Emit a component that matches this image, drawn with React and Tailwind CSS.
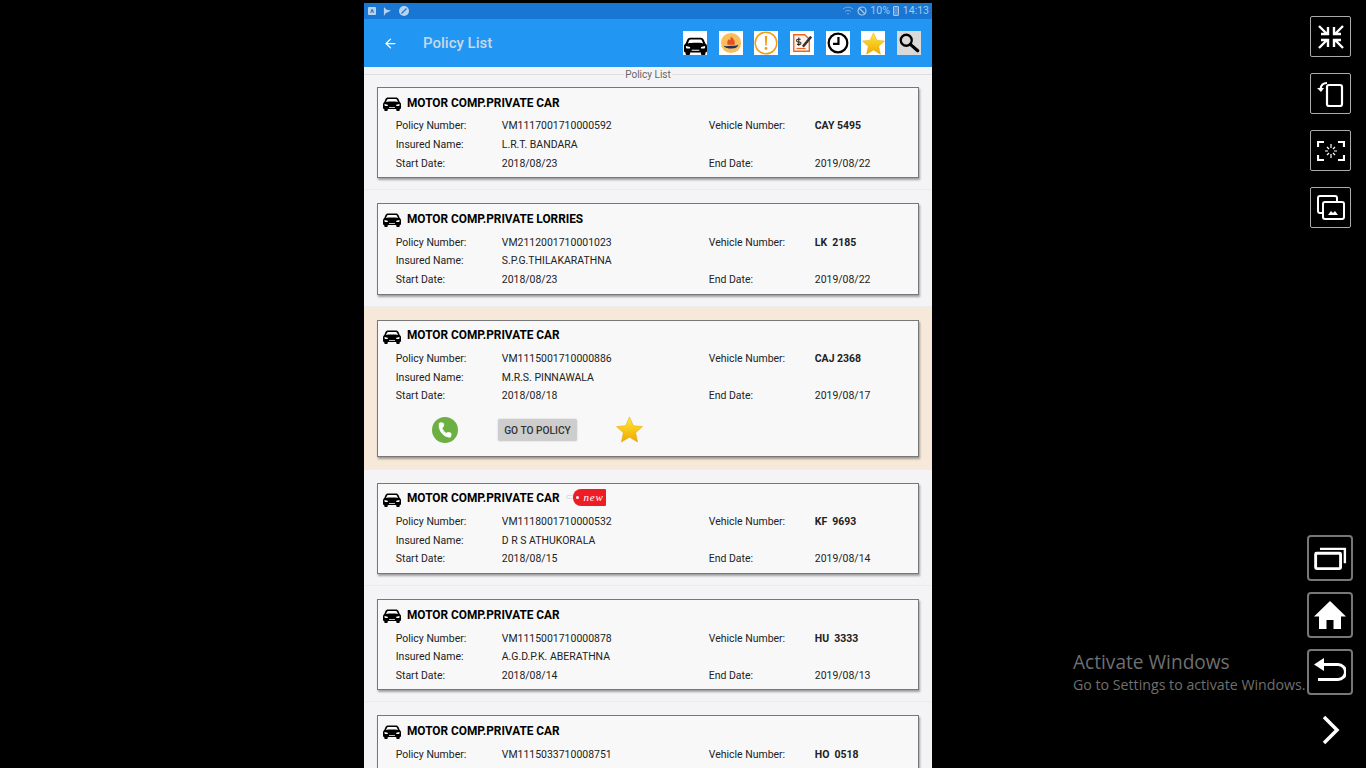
import React from 'react';
import { ArrowLeft, Phone } from 'lucide-react';

const policies = [
  { type: 'MOTOR COMP.PRIVATE CAR', no: 'VM1117001710000592', vehicle: 'CAY 5495', name: 'L.R.T. BANDARA', start: '2018/08/23', end: '2019/08/22' },
  { type: 'MOTOR COMP.PRIVATE LORRIES', no: 'VM2112001710001023', vehicle: 'LK  2185', name: 'S.P.G.THILAKARATHNA', start: '2018/08/23', end: '2019/08/22' },
  { type: 'MOTOR COMP.PRIVATE CAR', no: 'VM1115001710000886', vehicle: 'CAJ 2368', name: 'M.R.S. PINNAWALA', start: '2018/08/18', end: '2019/08/17', open: true },
  { type: 'MOTOR COMP.PRIVATE CAR', no: 'VM1118001710000532', vehicle: 'KF  9693', name: 'D R S ATHUKORALA', start: '2018/08/15', end: '2019/08/14', isNew: true },
  { type: 'MOTOR COMP.PRIVATE CAR', no: 'VM1115001710000878', vehicle: 'HU  3333', name: 'A.G.D.P.K. ABERATHNA', start: '2018/08/14', end: '2019/08/13' },
  // last row runs off the bottom of the screen, only the first line shows
  { type: 'MOTOR COMP.PRIVATE CAR', no: 'VM1115033710008751', vehicle: 'HO  0518', partial: true },
];

const CarIcon = ({ className }) => (
  <svg viewBox="0 0 36 28" className={className} fill="#000">
    <path d="M10 1h16c2.500 0 4 1.200 5 3.200L33.400 10c1.700 1 2.600 2.500 2.600 4.300V22a2 2 0 0 1-2 2h-.5v2a2 2 0 0 1-2 2h-3a2 2 0 0 1-2-2v-2H9.500v2a2 2 0 0 1-2 2h-3a2 2 0 0 1-2-2v-2H2a2 2 0 0 1-2-2v-7.700C0 12.500.9 11 2.600 10L5 4.200C6 2.200 7.500 1 10 1z" />
    <path d="M10.500 4h15c1.300 0 2.200.6 2.700 1.800l1.800 4.200C24 8.700 12 8.700 6 10l1.800-4.200C8.300 4.600 9.200 4 10.500 4z" fill="#fff" />
    <path d="M3 14l6.500 1.500v2.500H5c-1.300 0-2-.8-2-2zM33 14l-6.500 1.500v2.500H31c1.300 0 2-.8 2-2zM12 20h12v1.500H12z" fill="#fff" />
  </svg>
);

const StarIcon = ({ id, className }) => (
  <svg viewBox="0 0 28 28" className={className}>
    <defs>
      <linearGradient id={id} x1="0" y1="0" x2="0" y2="1">
        <stop offset="0" stopColor="#ffe93b" />
        <stop offset="1" stopColor="#f0a800" />
      </linearGradient>
    </defs>
    <path d="M14 1l4 9 9.500 1-7.100 6.400L22.400 27 14 22l-8.400 5 2-9.600L.5 11 10 10z" fill={`url(#${id})`} stroke="#e0a000" strokeWidth=".5" />
  </svg>
);

const HeaderIcons = () => (
  <div className="flex items-center gap-[11.67px]">
    <div className="w-6 h-6 bg-white overflow-hidden flex items-end justify-center">
      <CarIcon className="w-[23px] h-[20px] shrink-0 translate-y-[1px]" />
    </div>
    <div className="w-6 h-6 bg-white flex items-center justify-center">
      <svg viewBox="0 0 24 24" className="w-[22px] h-[22px]">
        <circle cx="12" cy="12" r="11" fill="#f7bf5d" />
        <path d="M12 5c1 1.500 4 3 4 6v3H8v-3c0-1.500 1-2 1.500-3L11 9z" fill="#e8501f" />
        <path d="M4 15c3 1 5 0 8 0s5 .5 8-1c-1 4-5 4-8 4s-6 0-8-3z" fill="#1f3550" />
      </svg>
    </div>
    <div className="w-6 h-6 bg-white flex items-center justify-center">
      <svg viewBox="0 0 24 24" className="w-6 h-6">
        <circle cx="12" cy="12" r="10.800" fill="#fff" stroke="#f39c12" strokeWidth="1.500" />
        <path d="M10.800 5h2.400l-.5 9.500h-1.400z" fill="#f39c12" />
        <circle cx="12" cy="17.500" r="1.400" fill="#f39c12" />
      </svg>
    </div>
    <div className="w-6 h-6 bg-white flex items-center justify-center">
      <svg viewBox="0 0 24 24" className="w-[22px] h-[22px]">
        <path d="M3 3h12l5 5v13H3z" fill="#fdf3ea" stroke="#e8662a" strokeWidth="1.500" />
        <path d="M6 18h10" stroke="#e8662a" strokeWidth="1.200" />
        <path d="M8.500 6v9M10.500 8H7.500a1.300 1.300 0 0 0 0 2.800h2a1.300 1.300 0 0 1 0 2.700H6.500" fill="none" stroke="#222" strokeWidth="1.100" />
        <path d="M12 15L21 4l2 2-9 11z" fill="#333" />
      </svg>
    </div>
    <div className="w-6 h-6 bg-white flex items-center justify-center">
      <svg viewBox="0 0 24 24" className="w-[22px] h-[22px]" fill="none" stroke="#000" strokeWidth="2.400">
        <circle cx="12" cy="12" r="10.200" />
        <path d="M12.500 5.500V13H6.500" />
      </svg>
    </div>
    <div className="w-6 h-6 bg-white flex items-center justify-center">
      <StarIcon id="star-head" className="w-[23px] h-[23px]" />
    </div>
    <div className="w-6 h-6 bg-[#d9d9d9] flex items-center justify-center">
      <svg viewBox="0 0 24 24" className="w-[22px] h-[22px]" fill="none" stroke="#000">
        <circle cx="9" cy="9" r="6" strokeWidth="2.500" />
        <path d="M13.500 13.500L21.500 20.500" strokeWidth="3.500" strokeLinecap="round" />
      </svg>
    </div>
  </div>
);

const NewTag = () => (
  <div className="flex items-center ml-[6px] -mt-[4px]">
    <div className="w-[8px] h-[4px] rounded-full border border-[#ddd] -mr-[1px]" />
    <div className="relative h-[17px] w-[33px] bg-[#ee1c25] rounded-l-[8px] rounded-r-[1px] flex items-center justify-end pr-[2px] font-['Liberation_Serif',serif] italic text-[11px] tracking-[0.8px] text-white">
      <span className="absolute left-[3px] top-[7px] w-[3px] h-[3px] rounded-full bg-white" />
      new
    </div>
  </div>
);

const Field = ({ label, value, bold }) => (
  <div className="flex items-center h-[18.6px]">
    <span className="w-[106px] shrink-0">{label}</span>
    <span className={bold ? 'font-bold whitespace-pre' : 'whitespace-pre'}>{value}</span>
  </div>
);

const PolicyCard = ({ policy, index }) => (
  <div className={`px-[13px] pt-[13px] border-b border-[#ececec] ${policy.open ? 'pb-[12px] bg-[#f6e9da]' : 'pb-[11px]'}`}>
    <div className="bg-[#f8f8f9] border border-[#77777a] shadow-[1px_2px_2px_rgba(0,0,0,0.35)]">
      <div className="flex items-center h-[29px] pl-[5px] pt-[2px]">
        <CarIcon className="w-[18px] h-[14px] mt-[1px]" />
        <span className="ml-[6px] text-[11.85px] font-bold text-black">{policy.type}</span>
        {policy.isNew && <NewTag />}
      </div>
      <div className="grid grid-cols-[313px_1fr] pl-[17.75px] pb-[4.5px] text-[10.47px] text-[#222]">
        <Field label="Policy Number:" value={policy.no} />
        <Field label="Vehicle Number:" value={policy.vehicle} bold />
        {!policy.partial && (
          <>
            <Field label="Insured Name:" value={policy.name} />
            <div />
            <Field label="Start Date:" value={policy.start} />
            <Field label="End Date:" value={policy.end} />
          </>
        )}
      </div>
      {policy.open && (
        <div className="flex items-center h-[46px] pb-[6px] pl-[54px]">
          <div className="w-[26px] h-[26px] rounded-full bg-[#6cb043] flex items-center justify-center">
            <Phone size={16} className="text-white rotate-[8deg]" fill="#fff" strokeWidth={1} />
          </div>
          <button className="ml-[40px] w-[79px] h-[22px] pt-[1px] bg-[#cdcdcd] rounded-[2px] shadow-[0_0_2px_rgba(0,0,0,0.2)] text-[10.2px] font-medium text-[#333]">
            GO TO POLICY
          </button>
          <StarIcon id={`star-${index}`} className="ml-[39px] w-[27px] h-[27px]" />
        </div>
      )}
    </div>
  </div>
);

const SmallBtn = ({ children }) => (
  <div className="w-[41px] h-[41px] border border-[#aaa] rounded-[2px] flex items-center justify-center">
    {children}
  </div>
);

const BigBtn = ({ children }) => (
  <div className="w-[46px] h-[46px] border-2 border-[#777] rounded-[4px] flex items-center justify-center">
    {children}
  </div>
);

const SideToolbar = () => (
  <div className="flex-1 flex flex-col justify-between items-end relative">
    <div className="flex flex-col gap-4 pt-[16px] pr-[15px]">
      <SmallBtn>
        <svg viewBox="0 0 28 28" className="w-7 h-7" fill="none" stroke="#fff" strokeWidth="2.400">
          <path d="M2 3l8 8M11 4v7H4M26 3l-8 8M17 4v7h7M2 25l8-8M11 24v-7H4M26 25l-8-8M17 24v-7h7" />
        </svg>
      </SmallBtn>
      <SmallBtn>
        <svg viewBox="0 0 28 28" className="w-7 h-7" fill="none" stroke="#fff" strokeWidth="2.200">
          <rect x="10" y="5" width="15" height="21" rx="2" />
          <path d="M10 3C6 3 4 5 3.500 9" />
          <path d="M0 8h7l-3 4z" fill="#fff" stroke="none" />
        </svg>
      </SmallBtn>
      <SmallBtn>
        <svg viewBox="0 0 28 28" className="w-7 h-7" fill="none" stroke="#fff" strokeWidth="2.200">
          <path d="M1 10V5h6M21 5h6v5M1 18v5h6M21 23h6v-5" />
          <path d="M14 7v4M14 17v4M8 14h3M17 14h3M10 10l2 2M18 10l-2 2M10 18l2-2M18 18l-2-2" strokeWidth="1.200" />
        </svg>
      </SmallBtn>
      <SmallBtn>
        <svg viewBox="0 0 28 28" className="w-7 h-7" fill="none" stroke="#fff" strokeWidth="2">
          <path d="M5 19H3a2 2 0 0 1-2-2V4a2 2 0 0 1 2-2h15a2 2 0 0 1 2 2v3" />
          <rect x="6" y="8" width="21" height="17" rx="2" />
          <path d="M11 21l3-4 2 2 2-2 3 4z" fill="#fff" stroke="none" />
        </svg>
      </SmallBtn>
    </div>
    <div className="flex flex-col items-center gap-[11px] pr-[13px] pb-[23px]">
      <BigBtn>
        <svg viewBox="0 0 34 24" className="w-[33px] h-[23px]" fill="none" stroke="#fff" strokeWidth="2.500">
          <rect x="1.500" y="6.500" width="26" height="16" rx="1" strokeWidth="3" />
          <path d="M6 2h26v15" />
        </svg>
      </BigBtn>
      <BigBtn>
        <svg viewBox="0 0 32 30" className="w-8 h-[30px]" fill="#fff">
          <path d="M16 1L32 16.500H27V29H19.500V20h-7v9H5V16.500H0z" />
        </svg>
      </BigBtn>
      <BigBtn>
        <svg viewBox="0 0 32 28" className="w-8 h-7" fill="none" stroke="#fff" strokeWidth="3">
          <path d="M8 6.500h16a6.500 6.500 0 0 1 0 15H4" />
          <path d="M10 0v13L0 6.500z" fill="#fff" stroke="none" />
        </svg>
      </BigBtn>
      <svg viewBox="0 0 20 30" className="w-[20px] h-[30px] mt-[9px]" fill="none" stroke="#fff" strokeWidth="3.500">
        <path d="M4 2l13 13L4 28" />
      </svg>
    </div>
    {/* watermark windows, sits over the toolbar */}
    <div className="absolute left-[141px] top-[650px] text-[#6f6f6f] whitespace-nowrap font-['Open_Sans',sans-serif]">
      <div className="text-[19.1px] leading-[24px]">Activate Windows</div>
      <div className="text-[14.2px] leading-[22px]">Go to Settings to activate Windows.</div>
    </div>
  </div>
);

export default function App() {
  return (
    <div className="h-[768px] overflow-hidden bg-black flex pl-[364px] font-['Roboto',sans-serif]">
      <div className="w-[568px] shrink-0 flex flex-col pt-[3px] bg-black">
        <div className="h-[16px] shrink-0 bg-[#1976d2] flex items-center justify-between pl-[4px] pr-[3px]">
          <div className="flex items-center gap-[7px]">
            <span className="w-[8px] h-[8px] rounded-[1px] bg-[#b9d4f1] text-[#1976d2] text-[6px] font-bold leading-[8px] text-center">A</span>
            <svg viewBox="0 0 10 10" className="w-[9px] h-[9px]" fill="#b9d4f1"><path d="M1 0v10l2-3 6-3-5-1z" /></svg>
            <svg viewBox="0 0 10 10" className="w-[10px] h-[10px]">
              <circle cx="5" cy="5" r="5" fill="#b9d4f1" />
              <path d="M2.500 7.500l5-5" stroke="#1976d2" strokeWidth="1.200" />
            </svg>
          </div>
          <div className="flex items-center gap-[3px] text-[10.5px] text-[#a9c8ea]">
            <svg viewBox="0 0 12 10" className="w-[12px] h-[10px]" fill="none" stroke="#7fade0"><path d="M1 3c3-2.500 7-2.500 10 0M3 5.500c2-1.500 4-1.500 6 0M5 8c.7-.5 1.300-.5 2 0" /></svg>
            <svg viewBox="0 0 10 10" className="w-[10px] h-[10px]" fill="none" stroke="#a9c8ea" strokeWidth="1.200"><circle cx="5" cy="5" r="4" /><path d="M2 2l6 6" /></svg>
            <span>10%</span>
            <span className="w-[6px] h-[10px] border border-[#a9c8ea] rounded-[1px] bg-[#a9c8ea]/40" />
            <span className="ml-[1px]">14:13</span>
          </div>
        </div>
        <div className="h-[48px] shrink-0 bg-[#2196f3] flex items-center pl-[19px] pr-[11px]">
          <ArrowLeft size={15} className="text-white" />
          <span className="ml-[25px] mt-[1px] text-[15px] font-medium text-[#c9d8e6]">Policy List</span>
          <div className="ml-auto"><HeaderIcons /></div>
        </div>
        <div className="flex-1 overflow-hidden bg-[#f4f4f6] pt-[7px]">
          <div className="relative h-[1px] -mb-[1px] bg-[#dedede]">
            <span className="absolute left-1/2 -translate-x-1/2 -top-[5px] bg-[#f4f4f6] px-[1px] text-[10px] leading-[12px] text-[#666]">Policy List</span>
          </div>
          {policies.map((p, i) => (
            <PolicyCard key={i} policy={p} index={i} />
          ))}
        </div>
      </div>
      <SideToolbar />
    </div>
  );
}
